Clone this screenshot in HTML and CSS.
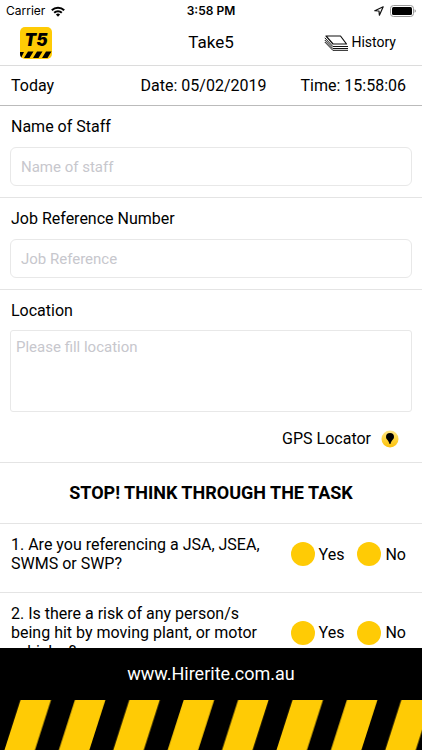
FILE: index.html
```
<!DOCTYPE html>
<html lang="en">
<head>
<meta charset="utf-8">
<meta name="viewport" content="width=device-width, initial-scale=1">
<title>Take5</title>
<link rel="stylesheet" href="styles.css">
</head>
<body>
<div class="status">
  <div class="status-left">
    <span>Carrier</span>
    <svg width="14" height="11" viewBox="0 0 14 11" fill="none" stroke="#000" stroke-width="2"><path d="M.8 4.2a8.8 8.8 0 0 1 12.4 0M3.2 6.7a5.4 5.4 0 0 1 7.6 0"/><path d="M7 10.800 4.900 8.600a3 3 0 0 1 4.200 0z" fill="#000" stroke="none"/></svg>
  </div>
  <div class="status-time">3:58 PM</div>
  <div class="status-right">
    <svg width="10" height="10" viewBox="0 0 10 10" fill="none" stroke="#111" stroke-width="1.2" stroke-linejoin="round"><path d="M9.2.8 5.400 9.200 5 5 .8 4.700z"/></svg>
    <svg width="26" height="12" viewBox="0 0 26 12"><rect x=".5" y=".5" width="23" height="11" rx="3" fill="#fff" stroke="#999"/><rect x="2" y="2" width="20" height="8" rx="1.5"/><path d="M24.600 4.200v3.600q1.200-.5 1.200-1.800t-1.200-1.800z" fill="#888"/></svg>
  </div>
</div>
<header class="header">
  <svg class="logo" width="32" height="32" viewBox="0 0 32 32" role="img" aria-label="T5">
    <defs><clipPath id="badge"><rect width="32" height="32" rx="5"/></clipPath></defs>
    <g clip-path="url(#badge)">
      <rect width="32" height="32" fill="#ffcb05"/>
      <path d="M0 25h4l-3 6H0zM8 24.500h5.500L9.500 31H4zM17 24.500h5.500L18.500 31H13zM26 24.500h5.500L27.500 31H22z"/>
    </g>
    <text class="logo-text" x="16" y="19" text-anchor="middle">T5</text>
  </svg>
  <h1 class="title">Take5</h1>
  <button class="history" type="button">
    <svg width="25" height="16" viewBox="0 0 25 16" fill="none" stroke="#111" stroke-linejoin="round"><path d="M2 1h14.500l6 8H9z" stroke-width="1.200"/><path d="M.8 2.800 8.800 11.500H24M.8 5l8 8.500H24M.8 7l8 8.300H24" stroke-width="1"/></svg>
    <span>History</span>
  </button>
</header>
<div class="datebar">
  <span>Today</span>
  <span class="date">Date: 05/02/2019</span>
  <span class="time">Time: 15:58:06</span>
</div>
<main class="form">
  <section class="field">
    <label for="staff">Name of Staff</label>
    <input id="staff" type="text" placeholder="Name of staff">
  </section>
  <section class="field">
    <label for="job">Job Reference Number</label>
    <input id="job" type="text" placeholder="Job Reference">
  </section>
  <section class="field">
    <label for="location">Location</label>
    <textarea id="location" placeholder="Please fill location"></textarea>
    <button class="gps" type="button">
      <span>GPS Locator</span>
      <svg width="18" height="18" viewBox="0 0 18 18"><defs><linearGradient id="gold" x1="0" y1="0" x2="0" y2="1"><stop offset="0" stop-color="#ffe68a"/><stop offset=".5" stop-color="#ffd43c"/><stop offset="1" stop-color="#fcc00a"/></linearGradient></defs><circle cx="9" cy="9" r="8.500" fill="url(#gold)"/><path d="M9 3a4 4 0 0 0-4 4c0 2.500 2.800 3.400 3.500 7h1c.7-3.600 3.500-4.500 3.500-7a4 4 0 0 0-4-4z"/></svg>
    </button>
  </section>
  <h2 class="heading">STOP! THINK THROUGH THE TASK</h2>
  <section class="question" role="radiogroup" aria-labelledby="q1">
    <p id="q1">1. Are you referencing a JSA, JSEA, SWMS or SWP?</p>
    <label class="choice"><input type="radio" name="q1"><span>Yes</span></label>
    <label class="choice"><input type="radio" name="q1"><span>No</span></label>
  </section>
  <section class="question" role="radiogroup" aria-labelledby="q2">
    <p id="q2">2. Is there a risk of any person/s being hit by moving plant, or motor vehicles?</p>
    <label class="choice"><input type="radio" name="q2"><span>Yes</span></label>
    <label class="choice"><input type="radio" name="q2"><span>No</span></label>
  </section>
</main>
<footer class="footer">
  <a href="#">www.Hirerite.com.au</a>
  <svg class="stripes" width="100%" height="50" aria-hidden="true">
    <defs><pattern id="hazard" x="4" width="54.400" height="50" patternUnits="userSpaceOnUse"><path d="M16.500 0H47L31 50H.5z" fill="#ffcb05"/></pattern></defs>
    <rect width="100%" height="50" fill="url(#hazard)"/>
  </svg>
</footer>
</body>
</html>
```
FILE: styles.css
```
* {
  box-sizing: border-box;
}

body {
  margin: 0;
  height: 100vh;
  display: flex;
  flex-direction: column;
  overflow: hidden;
  background: #fff;
  color: #000;
  font: 16px/19px Roboto, "Liberation Sans", sans-serif;
}

button {
  padding: 0;
  border: 0;
  background: none;
  color: inherit;
  font: inherit;
}

.status,
.header {
  display: grid;
  grid-template-columns: 1fr auto 1fr;
  align-items: center;
  flex: none;
}

.status {
  height: 22px;
  padding: 0 6px;
  font: 12px/22px Inter, "Liberation Sans", sans-serif;
}

.status-left,
.status-right {
  display: flex;
  align-items: center;
  gap: 6px;
}

.status-time {
  font-weight: 600;
}

.status-right {
  justify-content: flex-end;
}

.header {
  height: 44px;
  padding: 0 20px 2px;
  border-bottom: 1px solid #dcdcdc;
}

.logo-text {
  font: italic 900 17px Inter, sans-serif;
}

.title {
  margin: 0;
  font-size: 17px;
  font-weight: 400;
}

.history {
  display: flex;
  align-items: center;
  justify-self: end;
  gap: 2px;
  margin-right: 6px;
  font-size: 14px;
}

.datebar {
  display: grid;
  grid-template-columns: 1fr auto 1fr;
  align-items: center;
  flex: none;
  height: 40px;
  padding: 0 16px 0 11px;
  border-bottom: 1px solid #bbb;
}

.date {
  margin-right: 10px;
}

.time {
  text-align: right;
}

.form {
  flex: 1;
  min-height: 0;
  overflow: hidden;
}

.field {
  display: flex;
  flex-direction: column;
  padding: 11px 10px;
  border-bottom: 1px solid #e4e4e4;
}

.field label {
  padding-left: 1px;
}

.field input,
.field textarea {
  width: 100%;
  margin: 11px 0 0;
  border: 1px solid #e8e8e8;
  background: #fff;
  color: #000;
  font: inherit;
  font-size: 15px;
  outline: none;
}

.field input {
  height: 39px;
  padding: 0 10px;
  border-radius: 6px;
}

.field textarea {
  height: 82px;
  margin-top: 10px;
  padding: 7px 5px;
  border-radius: 3px;
  resize: none;
  display: block;
}

.field ::placeholder {
  color: #c7c7cd;
  opacity: 1;
}

.gps {
  display: flex;
  align-items: center;
  align-self: flex-end;
  gap: 10px;
  margin: 17px 13px 3px 0;
}

.heading {
  margin: 0;
  padding: 20px 0;
  border-bottom: 1px solid #e4e4e4;
  font-size: 18px;
  font-weight: 700;
  line-height: 20px;
  text-align: center;
}

.question {
  display: flex;
  align-items: center;
  padding: 11px 16px 19px 11px;
  border-bottom: 1px solid #e4e4e4;
}

.question p {
  flex: 1;
  margin: 0 20px 0 0;
}

.choice {
  display: flex;
  align-items: center;
  gap: 4px;
}

.choice + .choice {
  margin-left: 13px;
}

.choice input {
  appearance: none;
  width: 24px;
  height: 24px;
  margin: 0;
  border-radius: 50%;
  background: #ffcb05;
}

.choice input:checked {
  border: 6px solid #ffcb05;
  background: #000;
}

.footer {
  display: flex;
  flex-direction: column;
  flex: none;
  background: #000;
}

.footer a {
  padding: 16px 0;
  color: #fff;
  font-size: 18px;
  line-height: 20px;
  text-align: center;
  text-decoration: none;
}

.stripes {
  display: block;
}
```
